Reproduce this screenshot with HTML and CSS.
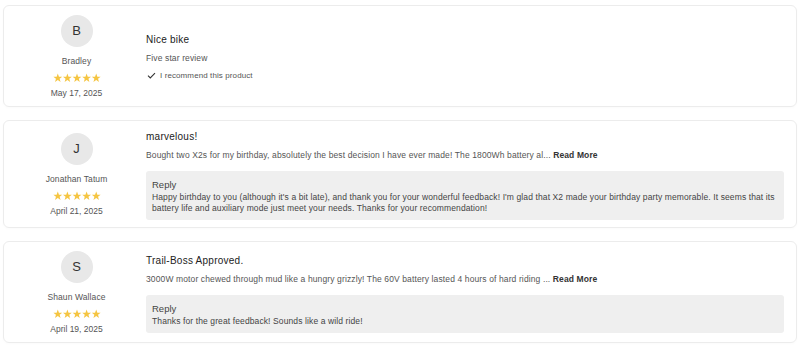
FILE: index.html
```html
<html>

<head>
  <title>Reviews</title>
  <link rel="stylesheet" href="styles.css">
</head>

<body>
  <div class="reviews">

    <div class="review card">
      <div class="author">
        <div class="avatar">B</div>
        <div class="name">Bradley</div>
        <div class="stars">
          <svg viewBox="0 0 50 10"><use href="#star" x="0"/><use href="#star" x="10"/><use href="#star" x="20"/><use href="#star" x="30"/><use href="#star" x="40"/></svg>
        </div>
        <div class="date">May 17, 2025</div>
      </div>
      <div class="content">
        <div class="title">Nice bike</div>
        <div class="body">Five star review</div>
        <div class="recommend">
          <svg class="check" viewBox="0 0 10 8"><polyline points="1,4.2 3.6,6.8 9,1.2"/></svg>
          I recommend this product
        </div>
      </div>
    </div>

    <div class="review card">
      <div class="author">
        <div class="avatar">J</div>
        <div class="name">Jonathan Tatum</div>
        <div class="stars">
          <svg viewBox="0 0 50 10"><use href="#star" x="0"/><use href="#star" x="10"/><use href="#star" x="20"/><use href="#star" x="30"/><use href="#star" x="40"/></svg>
        </div>
        <div class="date">April 21, 2025</div>
      </div>
      <div class="content">
        <div class="title">marvelous!</div>
        <div class="body">Bought two X2s for my birthday, absolutely the best decision I have ever made! The 1800Wh battery al... <b>Read More</b></div>
        <div class="reply">
          <div class="reply-label">Reply</div>
          <p>Happy birthday to you (although it's a bit late), and thank you for your wonderful feedback! I'm glad that X2 made your birthday party memorable. It seems that its battery life and auxiliary mode just meet your needs. Thanks for your recommendation!</p>
        </div>
      </div>
    </div>

    <div class="review card">
      <div class="author">
        <div class="avatar">S</div>
        <div class="name">Shaun Wallace</div>
        <div class="stars">
          <svg viewBox="0 0 50 10"><use href="#star" x="0"/><use href="#star" x="10"/><use href="#star" x="20"/><use href="#star" x="30"/><use href="#star" x="40"/></svg>
        </div>
        <div class="date">April 19, 2025</div>
      </div>
      <div class="content">
        <div class="title">Trail-Boss Approved.</div>
        <div class="body">3000W motor chewed through mud like a hungry grizzly! The 60V battery lasted 4 hours of hard riding ... <b>Read More</b></div>
        <div class="reply">
          <div class="reply-label">Reply</div>
          <p>Thanks for the great feedback! Sounds like a wild ride!</p>
        </div>
      </div>
    </div>

  </div>

  <svg width="0" height="0" class="defs">
    <defs>
      <polygon id="star" fill="#f5c542" points="5,0.4 6.2,3.6 9.6,3.7 6.9,5.8 7.9,9.1 5,7.2 2.1,9.1 3.1,5.8 0.4,3.7 3.8,3.6"/>
    </defs>
  </svg>
</body>

</html>
```

FILE: styles.css
```css
body {
  margin: 0;
  font-family: 'Liberation Sans', Arial, sans-serif;
  color: #555;
  background: #fff;
}

.reviews {
  padding: 5px 3px;
  display: flex;
  flex-direction: column;
  gap: 13px;
}

.card {
  border: 1px solid #ececec;
  border-radius: 6px;
  box-shadow: rgb(0 0 0 / 2%) 0px 1px 3px 0px;
}

.review {
  display: flex;
  align-items: center;
  gap: 7px;
  padding: 9px 12px 7px 10px;
}

.author {
  width: 125px;
  flex-shrink: 0;
  display: flex;
  flex-direction: column;
  align-items: center;
}

.avatar {
  width: 32px;
  height: 32px;
  border-radius: 50%;
  background: #e8e8e8;
  color: #333;
  font-size: 13px;
  line-height: 32px;
  text-align: center;
}

.name {
  margin-top: 9px;
  font-size: 8.5px;
  line-height: 11px;
  letter-spacing: 0.1px;
  color: #555;
}

.stars {
  margin-top: 5px;
  height: 11px;
  display: flex;
  align-items: center;
}

.stars svg {
  width: 48px;
  height: 10px;
}

.date {
  margin-top: 5px;
  font-size: 8.5px;
  line-height: 11px;
  letter-spacing: 0;
  color: #555;
}

.content {
  flex: 1;
  min-width: 0;
}

.title {
  font-size: 10px;
  line-height: 14px;
  letter-spacing: 0.25px;
  color: #222;
}

.body {
  margin-top: 4px;
  font-size: 8.5px;
  line-height: 14px;
  letter-spacing: 0.12px;
  color: #555;
}

.body b {
  color: #333;
}

.recommend {
  margin-top: 5px;
  display: flex;
  align-items: center;
  font-size: 8px;
  line-height: 12px;
  letter-spacing: 0.1px;
  color: #555;
}

.check {
  width: 9px;
  height: 7px;
  margin: 0 4px 0 1px;
  fill: none;
  stroke: #333;
  stroke-width: 1.2;
}

.reply {
  margin-top: 9px;
  padding: 7px 4px 6px 6px;
  border-radius: 3px;
  background: #efefef;
}

.reply-label {
  font-size: 9.5px;
  line-height: 14px;
  letter-spacing: 0;
  color: #444;
}

.reply p {
  margin: 0;
  font-size: 8.5px;
  line-height: 11px;
  letter-spacing: 0.11px;
  color: #444;
}

.defs {
  position: absolute;
}
```
